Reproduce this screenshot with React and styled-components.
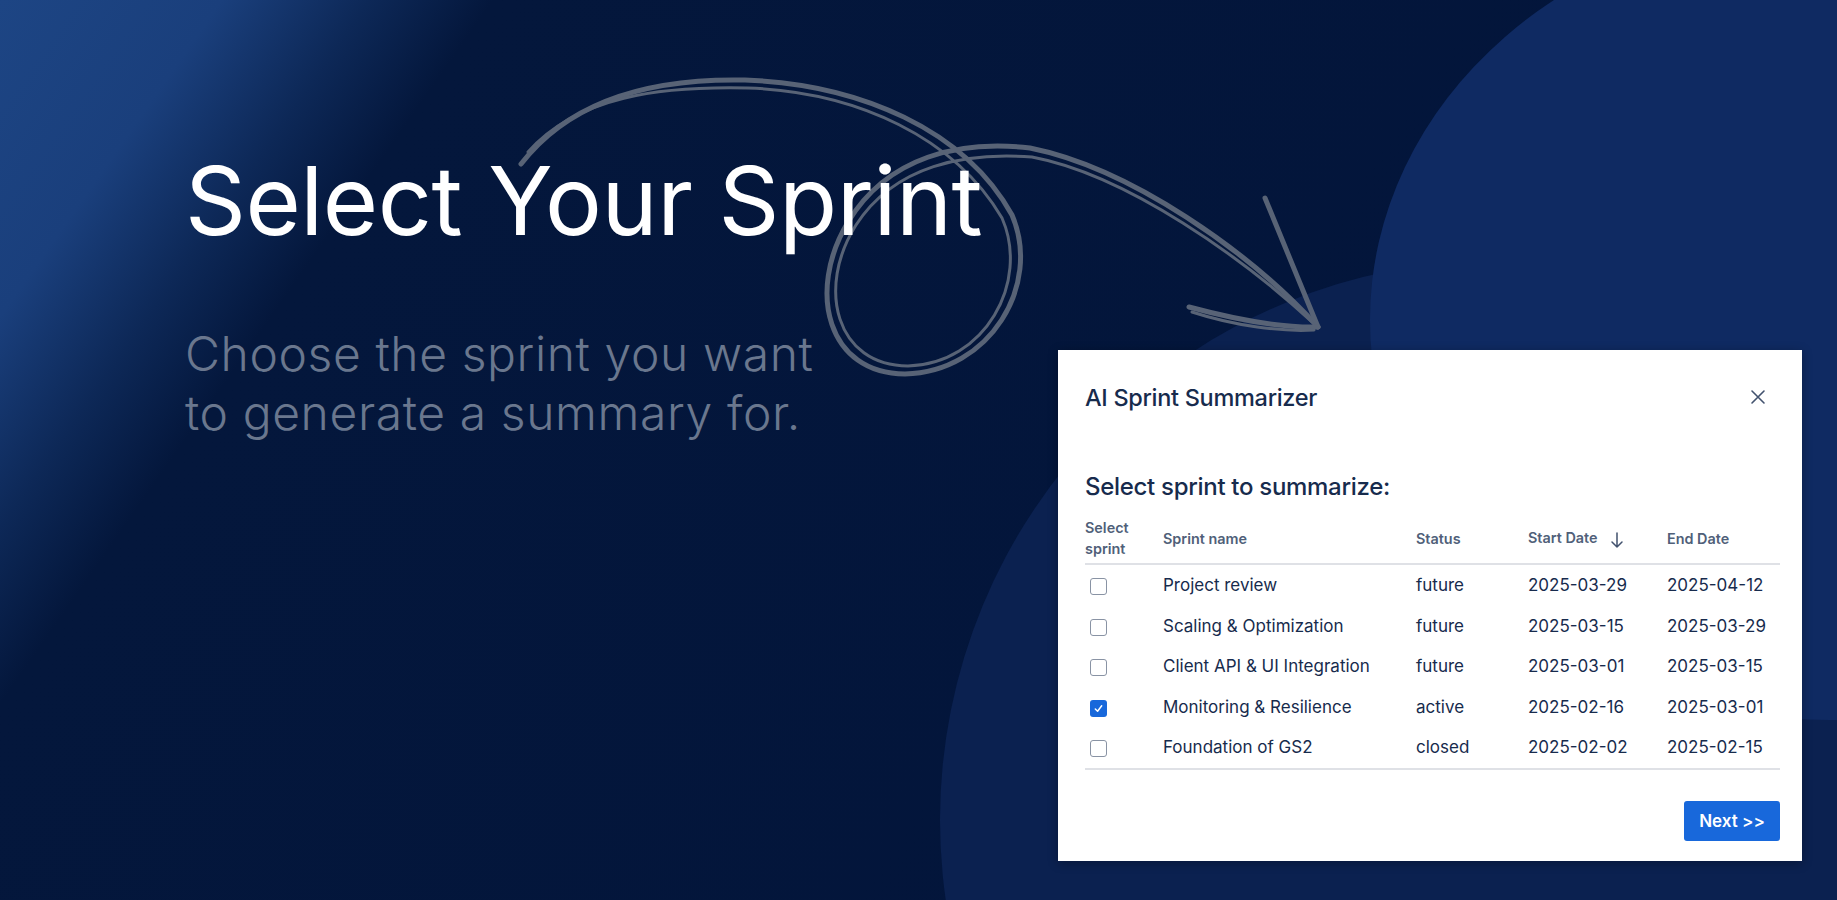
import React from 'react';
import styled, { createGlobalStyle } from 'styled-components';

const GlobalStyle = createGlobalStyle`
  html, body { margin: 0; padding: 0; }
  body { font-family: Inter, "Noto Sans", sans-serif; background: #021433; }
`;

const Page = styled.div`
  position: relative;
  width: 1837px;
  height: 900px;
  overflow: hidden;
  display: flex;
  background:
    linear-gradient(125deg, #1d4584 0%, #1a3f7c 9%, #0d2857 15%, #04173c 20%, #02143a 100%);
`;

const Blob = styled.div`
  position: absolute;
  left: ${(p) => p.x - p.rx}px;
  top: ${(p) => p.y - p.ry}px;
  width: ${(p) => p.rx * 2}px;
  height: ${(p) => p.ry * 2}px;
  border-radius: 50%;
  background: ${(p) => p.color};
`;

const Doodle = styled.svg`
  position: absolute;
  left: 0;
  top: 0;
  pointer-events: none;
  z-index: 1;
`;

const Intro = styled.div`
  position: relative;
  z-index: 2;
  width: 873px;
  padding: 136px 0 0 185px;
  box-sizing: border-box;
`;

const Headline = styled.h1`
  margin: 0;
  font-weight: 400;
  font-size: 95px;
  line-height: 130px;
  color: #ffffff;
  letter-spacing: -0.5px;
  white-space: nowrap;
`;

const Lead = styled.p`
  margin: 58px 0 0;
  font-weight: 300;
  font-size: 48px;
  line-height: 59px;
  color: #6a778e;
  letter-spacing: 0.6px;
  white-space: nowrap;
`;

const Modal = styled.div`
  position: relative;
  z-index: 3;
  margin: 350px 0 0 185px;
  width: 744px;
  height: 511px;
  background: #fff;
  box-sizing: border-box;
  padding: 0 22px 0 27px;
  display: flex;
  flex-direction: column;
  box-shadow: 0 2px 10px rgba(0, 0, 0, 0.3);
`;

const ModalHeader = styled.div`
  display: flex;
  align-items: center;
  justify-content: space-between;
  height: 94px;
`;

const ModalTitle = styled.h2`
  margin: 0;
  font-size: 23.5px;
  font-weight: 450;
  color: #172b4d;
  letter-spacing: -0.3px;
`;

const CloseButton = styled.button`
  border: none;
  background: none;
  padding: 0;
  margin-right: 14px;
  display: flex;
  color: #42526e;
`;

const Subheading = styled.h3`
  margin: 28px 0 16px;
  font-size: 24px;
  font-weight: 500;
  color: #172b4d;
  letter-spacing: -0.3px;
`;

const Table = styled.table`
  width: 100%;
  border-collapse: collapse;
  table-layout: fixed;
`;

const Th = styled.th`
  text-align: left;
  font-size: 14.4px;
  font-weight: 600;
  color: #505f79;
  line-height: 21px;
  padding: 0 0 4px;
  border-bottom: 2px solid #dfe1e6;
  vertical-align: middle;
  width: ${(p) => p.w}px;
`;

const SortArrow = styled.span`
  display: inline-flex;
  vertical-align: middle;
  margin-left: 12px;
  color: #42526e;
`;

const Td = styled.td`
  font-size: 17px;
  color: #172b4d;
  height: 40.5px;
  padding: 0;
  vertical-align: middle;
  white-space: nowrap;
`;

const Row = styled.tr`
  &:last-child td { border-bottom: 2px solid #dfe1e6; }
`;

const Box = styled.span`
  display: inline-flex;
  align-items: center;
  justify-content: center;
  width: 17px;
  height: 17px;
  margin-left: 5px;
  vertical-align: middle;
  box-sizing: border-box;
  border-radius: 3px;
  border: ${(p) => (p.checked ? 'none' : '1.5px solid #8993a4')};
  background: ${(p) => (p.checked ? '#1868db' : '#fff')};
`;

const Footer = styled.div`
  display: flex;
  justify-content: flex-end;
  margin-top: 31px;
`;

const NextButton = styled.button`
  width: 96px;
  height: 40px;
  border: none;
  border-radius: 3px;
  background: #1868db;
  color: #fff;
  font-family: inherit;
  font-size: 17px;
  font-weight: 600;
`;

const sprints = [
  { name: 'Project review', status: 'future', start: '2025-03-29', end: '2025-04-12' },
  { name: 'Scaling & Optimization', status: 'future', start: '2025-03-15', end: '2025-03-29' },
  { name: 'Client API & UI Integration', status: 'future', start: '2025-03-01', end: '2025-03-15' },
  { name: 'Monitoring & Resilience', status: 'active', start: '2025-02-16', end: '2025-03-01', checked: true },
  { name: 'Foundation of GS2', status: 'closed', start: '2025-02-02', end: '2025-02-15' },
];

const Checkbox = ({ checked }) => (
  <Box checked={checked}>
    {checked && (
      <svg width="11" height="11" viewBox="0 0 12 12">
        <path d="M2.5 6.5 L5 9 L9.5 3" fill="none" stroke="#fff" strokeWidth="1.6" strokeLinecap="round" strokeLinejoin="round" />
      </svg>
    )}
  </Box>
);

const loop =
  'M521,164 C570,100 650,78 745,80 C860,84 965,130 1012,215 C1042,285 990,372 905,374 C828,374 806,292 848,222 C888,156 960,140 1030,148 C1130,168 1250,252 1318,327';
const loop2 =
  'M528,152 C578,96 660,86 748,88 C858,92 955,138 1002,218 C1030,282 985,364 908,366 C836,366 816,288 856,225 C895,165 965,152 1032,157 C1128,175 1245,260 1312,322';

export default function App() {
  return (
    <>
      <GlobalStyle />
      <Page>
        <Blob x={1500} y={820} rx={560} ry={560} color="#0b2150" />
        <Blob x={1830} y={320} rx={460} ry={400} color="#0f2a62" />
        <Doodle width="1837" height="900" viewBox="0 0 1837 900">
          <g fill="none" stroke="#586376" strokeLinecap="round" strokeLinejoin="round">
            <path d={loop} strokeWidth="5" />
            <path d={loop2} strokeWidth="3" />
            <path d="M1265,198 L1318,327" strokeWidth="5" />
            <path d="M1189,307 C1230,318 1280,328 1318,327" strokeWidth="5" />
            <path d="M1192,312 C1235,326 1282,332 1314,330" strokeWidth="3" />
          </g>
        </Doodle>
        <Intro>
          <Headline>Select Your Sprint</Headline>
          <Lead>
            Choose the sprint you want
            <br />
            to generate a summary for.
          </Lead>
        </Intro>
        <Modal>
          <ModalHeader>
            <ModalTitle>AI Sprint Summarizer</ModalTitle>
            <CloseButton aria-label="Close">
              <svg width="16" height="16" viewBox="0 0 16 16">
                <path d="M2 2 L14 14 M14 2 L2 14" stroke="currentColor" strokeWidth="1.6" strokeLinecap="round" />
              </svg>
            </CloseButton>
          </ModalHeader>
          <Subheading>Select sprint to summarize:</Subheading>
          <Table>
            <thead>
              <tr>
                <Th w={78}>
                  Select
                  <br />
                  sprint
                </Th>
                <Th w={253}>Sprint name</Th>
                <Th w={112}>Status</Th>
                <Th w={139}>
                  Start Date
                  <SortArrow>
                    <svg width="14" height="18" viewBox="0 0 14 18">
                      <path d="M7 2 V16 M2 11 L7 16 L12 11" fill="none" stroke="currentColor" strokeWidth="1.5" strokeLinecap="round" strokeLinejoin="round" />
                    </svg>
                  </SortArrow>
                </Th>
                <Th>End Date</Th>
              </tr>
            </thead>
            <tbody>
              {sprints.map((s) => (
                <Row key={s.name}>
                  <Td>
                    <Checkbox checked={s.checked} />
                  </Td>
                  <Td>{s.name}</Td>
                  <Td>{s.status}</Td>
                  <Td>{s.start}</Td>
                  <Td>{s.end}</Td>
                </Row>
              ))}
            </tbody>
          </Table>
          <Footer>
            <NextButton>Next &gt;&gt;</NextButton>
          </Footer>
        </Modal>
      </Page>
    </>
  );
}
